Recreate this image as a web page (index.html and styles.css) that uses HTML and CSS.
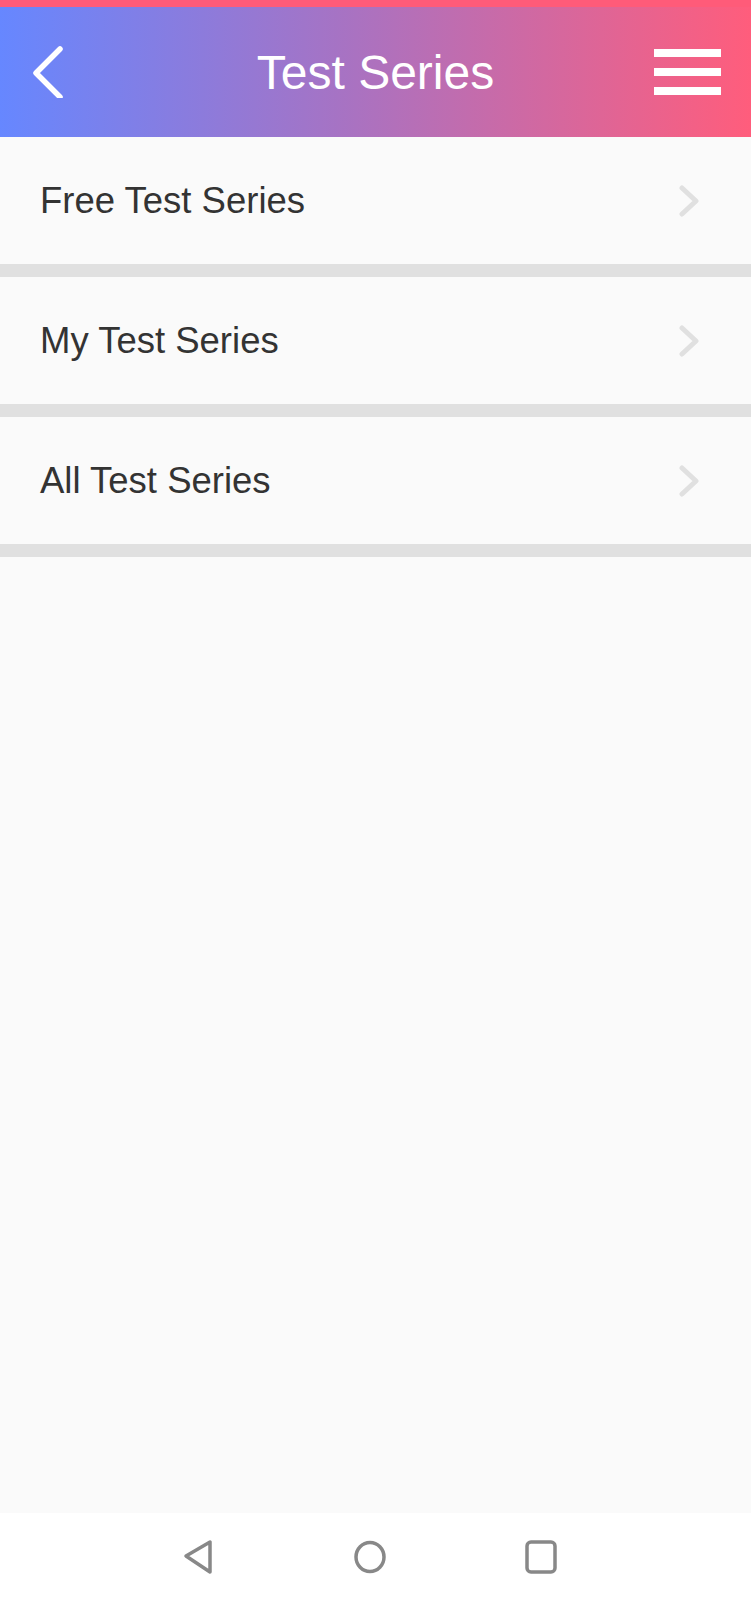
FILE: index.html
```html
<!DOCTYPE html>
<html>
<head>
<meta charset="utf-8">
<link rel="stylesheet" href="styles.css">
</head>
<body>
<div class="app">
  <div class="status"></div>
  <header class="header">
    <svg class="back" width="40" height="52" viewBox="0 0 40 52">
      <polyline points="27,3 3,27 27,51" fill="none" stroke="#fff" stroke-width="5.5" stroke-linecap="round" stroke-linejoin="round"/>
    </svg>
    <h1 class="title">Test Series</h1>
    <div class="menu"><span></span><span></span><span></span></div>
  </header>
  <main class="list">
    <div class="item"><span class="label">Free Test Series</span><svg class="chev" width="24" height="32" viewBox="0 0 24 32"><polyline points="6,3 20,16 6,29" fill="none" stroke="#e0e0e0" stroke-width="5" stroke-linecap="round" stroke-linejoin="round"/></svg></div>
    <div class="sep"></div>
    <div class="item"><span class="label">My Test Series</span><svg class="chev" width="24" height="32" viewBox="0 0 24 32"><polyline points="6,3 20,16 6,29" fill="none" stroke="#e0e0e0" stroke-width="5" stroke-linecap="round" stroke-linejoin="round"/></svg></div>
    <div class="sep"></div>
    <div class="item"><span class="label">All Test Series</span><svg class="chev" width="24" height="32" viewBox="0 0 24 32"><polyline points="6,3 20,16 6,29" fill="none" stroke="#e0e0e0" stroke-width="5" stroke-linecap="round" stroke-linejoin="round"/></svg></div>
    <div class="sep"></div>
  </main>
  <nav class="navbar">
    <svg width="34" height="36" viewBox="0 0 34 36"><path d="M28 3 L28 33 L4 17 Z" fill="none" stroke="#888" stroke-width="3.5" stroke-linejoin="round"/></svg>
    <svg width="34" height="36" viewBox="0 0 34 36"><ellipse cx="17" cy="18" rx="14" ry="14.5" fill="none" stroke="#888" stroke-width="3.5"/></svg>
    <svg width="34" height="36" viewBox="0 0 34 36"><rect x="3" y="3" width="28" height="30" rx="4" fill="none" stroke="#888" stroke-width="3.5"/></svg>
  </nav>
</div>
</body>
</html>
```
FILE: styles.css
```css
* { box-sizing: border-box; }
html, body { margin: 0; padding: 0; }
body {
  width: 751px;
  height: 1600px;
  background: #fafafa;
  font-family: "Liberation Sans", Arial, sans-serif;
  overflow: hidden;
}
.app {
  display: flex;
  flex-direction: column;
  height: 1600px;
}
.status {
  height: 7px;
  background: #ff5b79;
}
.header {
  height: 130px;
  background: linear-gradient(90deg, #6687ff 0%, #a673c4 45%, #ff5d7c 100%);
  display: grid;
  grid-template-columns: 1fr auto 1fr;
  align-items: center;
  padding: 0 30px 0 30px;
}
.back {
  display: block;
  margin-left: 3px;
}
.title {
  margin: 0;
  text-align: center;
  color: #fff;
  font-weight: normal;
  font-size: 48px;
}
.menu {
  justify-self: end;
  width: 67px;
  display: flex;
  flex-direction: column;
  gap: 11px;
}
.menu span {
  display: block;
  height: 8px;
  background: #fff;
}
.list {
  flex: 1;
  display: flex;
  flex-direction: column;
}
.item {
  height: 127px;
  display: flex;
  align-items: center;
  justify-content: space-between;
  padding: 0 51px 0 40px;
  background: #fafafa;
}
.label {
  font-size: 36.5px;
  color: #333;
}
.chev { display: block; }
.sep {
  height: 13px;
  background: #e0e0e0;
}
.navbar {
  height: 87px;
  background: #fff;
  display: flex;
  align-items: center;
  justify-content: center;
  gap: 137px;
  padding-right: 11px;
}
.navbar svg { display: block; }
```
